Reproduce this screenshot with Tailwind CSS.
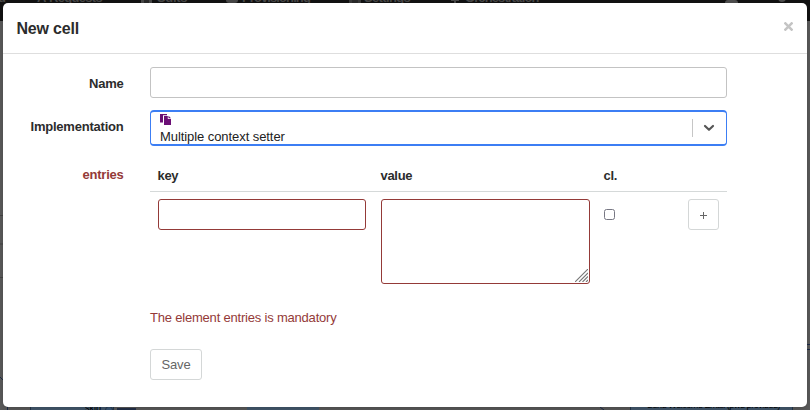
<!DOCTYPE html>
<html lang="en">
<head>
<meta charset="utf-8">
<title>New cell</title>
<script src="https://cdn.jsdelivr.net/npm/@tailwindcss/browser@4"></script>
</head>
<body class="relative h-[410px] w-[810px] overflow-hidden bg-[#5b5b5b] font-['Liberation_Sans',Arial,sans-serif] text-[13px] text-[#2c2c2c]">
  <!-- dimmed page behind the dialog -->
  <div class="absolute inset-0" aria-hidden="true">
    <div class="relative h-[21px] bg-[#121212] text-[13px] leading-[14px] font-bold text-[#484848]">
      <span class="absolute top-[-9px] left-[-2px]">d</span>
      <span class="absolute top-[-9px] left-[37px]">A</span>
      <span class="absolute top-[-9px] left-[49px] tracking-[-0.7px]">Requests</span>
      <span class="absolute top-0 left-[141px] h-[3px] w-[11px] border-x-[3px] border-[#484848] bg-[#2a2a2a]"></span>
      <span class="absolute top-[-9px] left-[157px] tracking-[-0.3px]">Suits</span>
      <span class="absolute top-0 left-[226px] h-[3px] w-[12px] rounded-b-sm bg-[#484848]"></span>
      <span class="absolute top-[-9px] left-[242px] tracking-[-0.9px]">Provisioning</span>
      <span class="absolute top-0 left-[349px] h-[3px] w-[12px] border-x-[3px] border-[#3a3a3a] bg-[#2a2a2a]"></span>
      <span class="absolute top-[-9px] left-[364px] tracking-[-0.65px]">Settings</span>
      <span class="absolute top-0 left-[451px] h-px w-[8px] bg-[#484848]"></span>
      <span class="absolute top-0 left-[454px] h-[3px] w-[2px] bg-[#484848]"></span>
      <span class="absolute top-[-9px] left-[465px] tracking-[-0.9px]">Orchestration</span>
      <span class="absolute top-0 left-[725px] h-[3px] w-[13px] rounded-t-md bg-[#505050]"></span>
      <span class="absolute top-[-6px] left-[778px] size-[8px] rounded-full border-2 border-[#505050]"></span>
    </div>
    <svg class="absolute inset-0" width="810" height="410" fill="none">
      <path d="M0 215.5H3M0 244H3M0 277.500H3" stroke="#444"/>
      <path d="M0 377L3 380M7.500 407V410M807 344.500H810M807 349.500H810M600 407L604 410" stroke="#1d2b48"/>
      <rect x="30.500" y="400.500" width="83" height="20" fill="#44596e" stroke="#26384d"/>
      <path d="M117 409H136" stroke="#243149" stroke-width="2"/>
      <circle cx="109" cy="410" r="3.500" fill="#3b5878" stroke="#26384d"/>
      <rect x="247" y="406" width="72" height="4" fill="#44596e"/>
      <rect x="630.500" y="400.500" width="162" height="20" fill="#44596e" stroke="#26384d"/>
    </svg>
    <span class="absolute top-[402px] left-[85px] text-[9px] leading-[12px] text-black">skip</span>
    <span class="absolute top-[399px] left-[647px] text-[9px] leading-[12px] tracking-[-0.45px] whitespace-nowrap text-black">Send Welcome Email (pwd provided)</span>
  </div>

  <!-- dialog -->
  <section class="relative mx-[3px] mt-[-18px] h-[404px] translate-y-[21px] rounded-[5px] bg-white shadow-[0_2px_6px_rgba(0,0,0,0.2)]">
    <header class="flex h-[51px] justify-between border-b border-[#dedede] pr-[14px] pl-[13.500px]">
      <h1 class="mt-[15px] text-[16px] leading-[22px] font-bold tracking-[-0.2px]">New cell</h1>
      <button class="mt-[19px] h-[9px] w-[9px]" aria-label="Close">
        <svg width="9" height="9" viewBox="0 0 9 9" stroke="#c4c4c4" stroke-width="2.500"><path d="M.5.5l8 8M8.500.5l-8 8"/></svg>
      </button>
    </header>

    <form class="grid grid-cols-[120.500px_577px] gap-x-[26.500px] pt-[13px]">
      <label class="pt-[9px] text-right leading-[16px] font-bold tracking-[-0.22px]">Name</label>
      <input class="h-[31px] w-full rounded-[3px] border border-[#c3c3c3]">

      <label class="mt-[12px] pt-[9px] text-right leading-[16px] font-bold tracking-[-0.22px]">Implementation</label>
      <div class="mt-[12px] flex h-[36px] items-center rounded-[4px] border-2 border-[#3c7ef4] border-x-[1.500px] pr-[11px] pl-[9px]">
        <div class="flex-1 self-start pt-[2px]">
          <svg width="11" height="11" viewBox="0 0 11 11" fill="#6b0f75"><path d="M0 0h7v1.200H3v7.300H0z"/><path d="M4 2h3.800v3H11v6H4z"/><path d="M8.500 1.800L11 4.300H8.500z"/></svg>
          <div class="mt-[4px] leading-[16px] tracking-[-0.07px] text-[#222]">Multiple context setter</div>
        </div>
        <span class="mr-[10px] h-[18px] w-px bg-[#c6c6c6]"></span>
        <svg width="12" height="8" viewBox="0 0 12 8" fill="none" stroke="#565656" stroke-width="2.200" stroke-linecap="round" stroke-linejoin="round"><path d="M2 2l4 3.800L10 2"/></svg>
      </div>

      <label class="mt-[12px] pt-[9px] text-right leading-[16px] font-bold tracking-[-0.25px] text-[#943a38]">entries</label>
      <div class="mt-[12px]">
        <div class="grid h-[34px] grid-cols-[223px_223px_1fr] border-b border-[#d5d9d9] pt-[10px] pl-[7.500px] leading-[16px] font-bold tracking-[-0.3px]">
          <span>key</span><span>value</span><span>cl.</span>
        </div>
        <div class="flex items-start pt-[7px] pr-[8px] pl-[8px]">
          <input class="h-[31px] w-[208px] rounded-[3px] border border-[#943a38]">
          <div class="relative ml-[15px] h-[85px] w-[209px]">
            <textarea class="block size-full resize-none rounded-[3px] border border-[#943a38]"></textarea>
            <svg class="absolute right-[2px] bottom-[2px]" width="13" height="13" stroke="#777" stroke-width="1.100"><path d="M0 13L13 0M4 13L13 4M7.500 13L13 7.500M11 13L13 11"/></svg>
          </div>
          <span class="mt-[10px] ml-[14px] size-[11px] rounded-[2.500px] border border-[#777783]" role="checkbox" aria-checked="false"></span>
          <button type="button" class="ml-auto flex size-[31px] items-center justify-center rounded-[3px] border border-[#d4d7d7]" aria-label="Add">
            <svg class="mt-[2px]" width="7" height="7" stroke="#666"><path d="M0 3.500H7M3.500 0V7"/></svg>
          </button>
        </div>
      </div>

      <div class="col-start-2">
        <p class="mt-[26px] leading-[16px] tracking-[-0.2px] text-[#943a38]">The element entries is mandatory</p>
        <button type="button" class="mt-[23px] h-[31px] w-[52px] rounded-[3px] border border-[#d4d7d7] tracking-[-0.2px] text-[#666]">Save</button>
      </div>
    </form>
  </section>
</body>
</html>
